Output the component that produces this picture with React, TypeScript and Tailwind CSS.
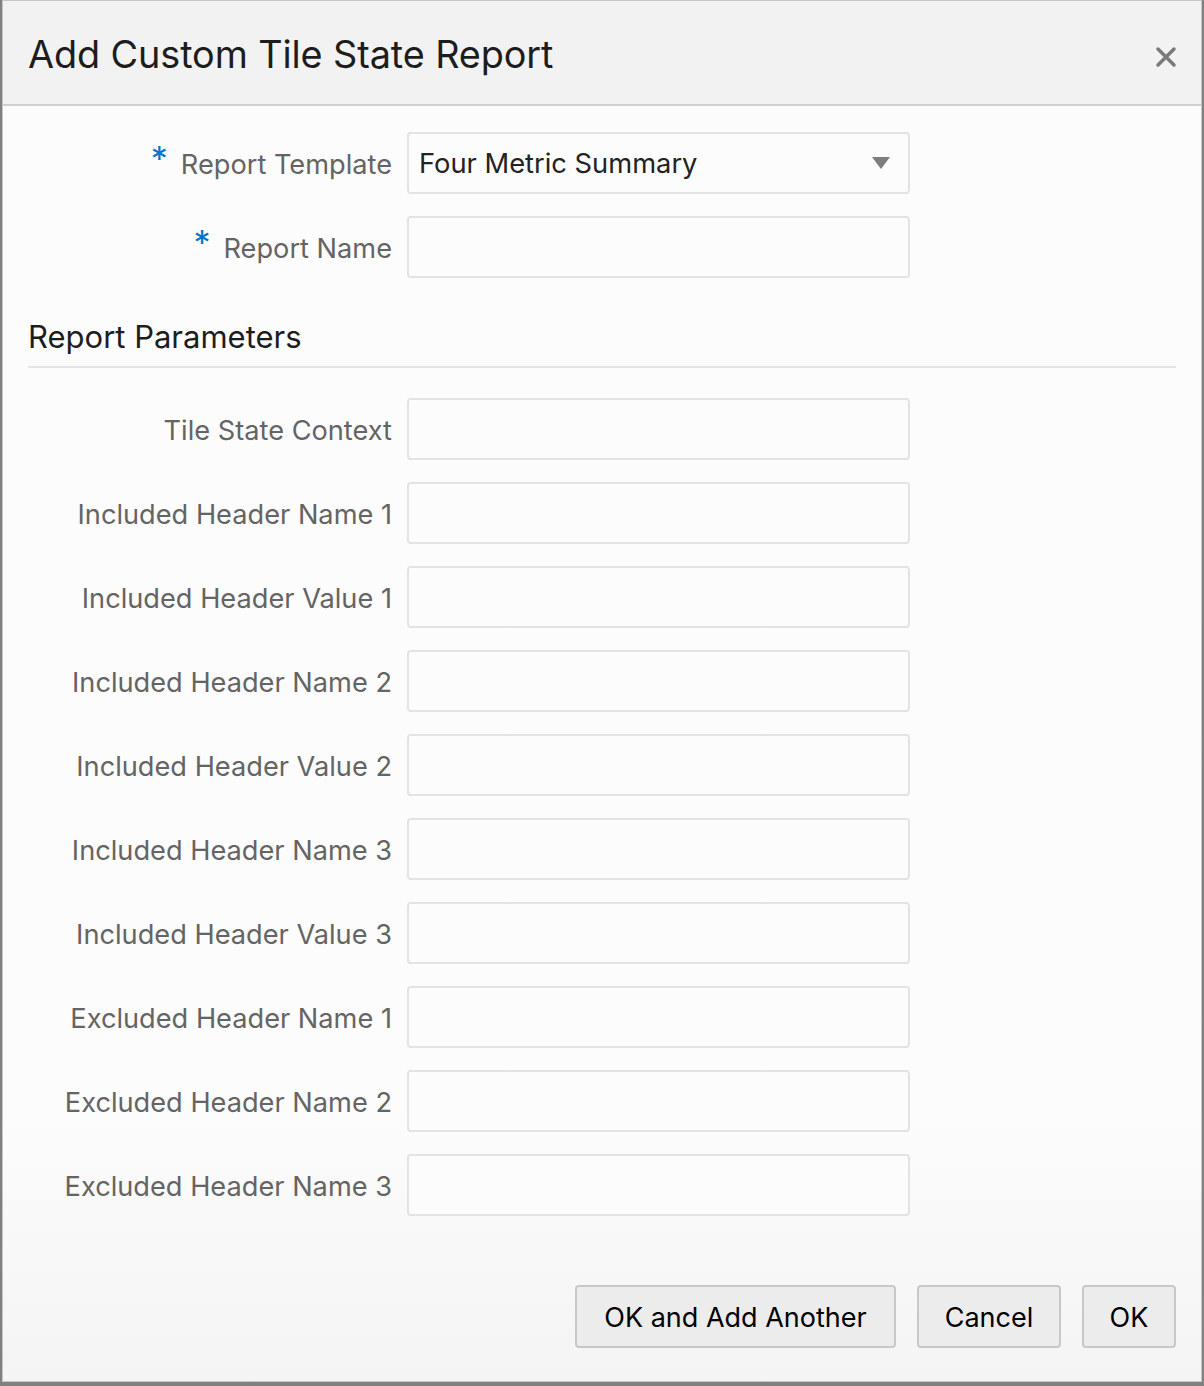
const font = "font-['Inter','Liberation_Sans',sans-serif]";

const requiredRows = ["Report Template", "Report Name"];

const paramRows = [
  "Tile State Context",
  "Included Header Name 1",
  "Included Header Value 1",
  "Included Header Name 2",
  "Included Header Value 2",
  "Included Header Name 3",
  "Included Header Value 3",
  "Excluded Header Name 1",
  "Excluded Header Name 2",
  "Excluded Header Name 3",
];

function FieldLabel({ text, required }: { text: string; required?: boolean }) {
  return (
    <div className="w-[379px] flex justify-end items-center pr-[15px]">
      {required && (
        <span className="text-[34px] leading-none text-[#0572ce] mr-[13px] -translate-y-[4px]">*</span>
      )}
      <span className="text-[27.2px] text-[#646464] whitespace-nowrap mt-[5px]">{text}</span>
    </div>
  );
}

function TextBox() {
  return <div className="w-[503px] h-[62px] rounded-[4px] border-2 border-[#e3e3e3] bg-[#fcfcfc]" />;
}

export default function App() {
  return (
    <div className={`w-[1204px] h-[1386px] bg-[#808080] pl-[2px] pr-[2px] pb-[4px] flex ${font}`}>
      <div className="flex-1 flex flex-col border border-[#c6c6c6] bg-gradient-to-b from-[#fcfcfc] from-80% to-[#f4f4f4]">
        <div className="h-[105px] shrink-0 bg-[#f2f2f2] border-b-2 border-[#d0d0d0] flex items-center justify-between pl-[25px] pr-[24px]">
          <h1 className="text-[37.8px] text-[#1d1d1d] tracking-[-0.1px] mt-[3px]">Add Custom Tile State Report</h1>
          <svg width="22" height="22" viewBox="0 0 22 22" className="mt-[8px]">
            <path d="M3 3 L19 19 M19 3 L3 19" stroke="#7a7a7a" strokeWidth="3.5" strokeLinecap="round" />
          </svg>
        </div>

        <div className="flex-1 flex flex-col px-[25px] pt-[26px] pb-[33px]">
          <div className="flex flex-col gap-[22px]">
            <div className="flex items-center">
              <FieldLabel text={requiredRows[0]} required />
              <div className="w-[503px] h-[62px] rounded-[4px] border-2 border-[#e3e3e3] bg-[#fcfcfc] flex items-center justify-between pl-[10px] pr-[18px]">
                <span className="text-[27.3px] text-[#222] mt-[3px]">Four Metric Summary</span>
                <svg width="18" height="12" viewBox="0 0 18 12">
                  <path d="M0 0 H18 L9 12 Z" fill="#7d7d7d" />
                </svg>
              </div>
            </div>
            <div className="flex items-center">
              <FieldLabel text={requiredRows[1]} required />
              <TextBox />
            </div>
          </div>

          <h2 className="mt-[41px] text-[31px] leading-[36px] text-[#1d1d1d] pb-[11px] border-b-2 border-[#e6e6e6]">
            Report Parameters
          </h2>

          <div className="mt-[30px] flex flex-col gap-[22px]">
            {paramRows.map((label) => (
              <div key={label} className="flex items-center">
                <FieldLabel text={label} />
                <TextBox />
              </div>
            ))}
          </div>

          <div className="mt-auto flex justify-end gap-[21px]">
            <button className="h-[63px] w-[321px] rounded-[4px] border-2 border-[#c8c8c8] bg-[#ececec] text-[27px] text-black pt-[3px]">
              OK and Add Another
            </button>
            <button className="h-[63px] w-[144px] rounded-[4px] border-2 border-[#c8c8c8] bg-[#ececec] text-[27px] text-black pt-[3px]">
              Cancel
            </button>
            <button className="h-[63px] w-[94px] rounded-[4px] border-2 border-[#c8c8c8] bg-[#ececec] text-[27px] text-black pt-[3px]">
              OK
            </button>
          </div>
        </div>
      </div>
    </div>
  );
}
